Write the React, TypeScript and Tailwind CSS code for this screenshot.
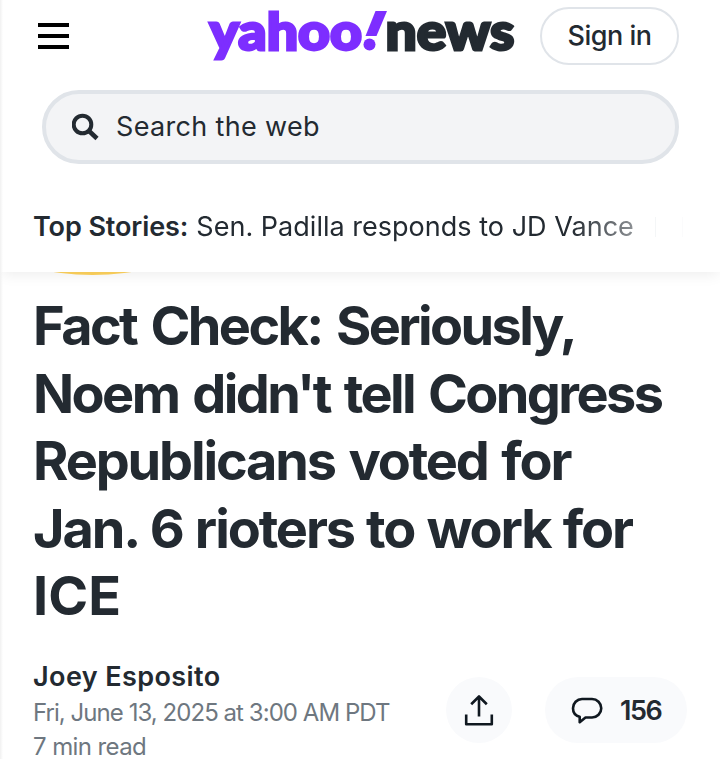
const headline = [
  { text: "Fact Check: Seriously,", spacing: "tracking-[-2.6px] [word-spacing:4px]" },
  { text: "Noem didn't tell Congress", spacing: "tracking-[-2.6px] [word-spacing:3.7px]" },
  { text: "Republicans voted for", spacing: "tracking-[-2.15px] [word-spacing:3px]" },
  { text: "Jan. 6 rioters to work for", spacing: "tracking-[-2.1px] [word-spacing:1.5px]" },
  { text: "ICE", spacing: "tracking-[0.1px]" },
];

function Logo() {
  return (
    <svg width="310" height="70" viewBox="0 0 310 70" className="shrink-0 overflow-visible font-['Lato',sans-serif] font-black" aria-label="yahoo!news">
      <text x="2.5" y="45.200" fontSize="52" fill="#7d2eff" stroke="#7d2eff" strokeWidth="2.8" textLength="152.500" lengthAdjust="spacingAndGlyphs">yahoo</text>
      <path d="M168.500 6H180l-10.500 25h-11z" fill="#7d2eff" />
      <circle cx="162.500" cy="39.500" r="6" fill="#7d2eff" />
      <text x="178.500" y="45.200" fontSize="52" fill="#232a31" stroke="#232a31" strokeWidth="2.8" textLength="129" lengthAdjust="spacingAndGlyphs">news</text>
    </svg>
  );
}

function Header() {
  return (
    <header className="relative z-10 h-[272px] bg-white shadow-[0_4px_14px_-2px_rgba(0,0,0,0.08)]">
      <div className="flex items-start h-[90px] pl-[38px]">
        <button aria-label="Menu" className="mt-[23px] flex flex-col gap-[7px]">
          <span className="h-[4px] w-[31px] bg-black" />
          <span className="h-[4px] w-[31px] bg-black" />
          <span className="h-[4px] w-[31px] bg-black" />
        </button>
        <div className="ml-[138px] mt-[5px]">
          <Logo />
        </div>
        <button className="ml-[23px] mt-[7px] h-[58px] w-[139px] shrink-0 rounded-full border-2 border-[#e0e4e9] text-[27px] font-medium tracking-[-0.5px]">
          Sign in
        </button>
      </div>

      <div className="ml-[42px] flex h-[74px] w-[637px] items-center rounded-full border-4 border-[#e0e4e9] bg-[#f3f4f6] pl-[26px]">
        <svg width="28" height="28" viewBox="0 0 28 28" fill="none" stroke="#232a31" className="shrink-0">
          <circle cx="10.500" cy="11.500" r="8.800" strokeWidth="4" />
          <path d="M16.500 17.500l8.500 8" strokeWidth="4.600" />
        </svg>
        <span className="ml-4 text-[27px] tracking-[0.33px]">Search the web</span>
      </div>

      <div className="flex h-[108px] items-center pl-[33px] pt-[18px] text-[27px] leading-9 whitespace-nowrap">
        <strong className="font-semibold tracking-[-0.1px]">Top Stories:</strong>
        <div className="ml-2 flex items-center [mask-image:linear-gradient(to_right,#000_375px,transparent_505px)]">
          <span className="w-[437px] tracking-[0.02px]">Sen. Padilla responds to JD Vance</span>
          <span className="ml-[22px] h-5 w-px bg-[#e0e4e9]" />
          <span className="ml-[26px] h-5 w-px bg-[#e0e4e9]" />
        </div>
      </div>
    </header>
  );
}

function Byline() {
  return (
    <div className="mt-[28px] flex pl-[33px]">
      <div className="w-[413px] shrink-0 whitespace-nowrap text-[24px] leading-[34px] text-[#6e7780]">
        <div className="text-[27px] leading-[38px] font-semibold tracking-[0.4px] text-[#232a31]">Joey Esposito</div>
        <div className="tracking-[-0.95px]">Fri, June 13, 2025 at 3:00 AM PDT</div>
        <div className="mt-[5px] leading-6 tracking-[-0.6px]">7 min read</div>
      </div>
      <button aria-label="Share" className="mt-[19px] flex h-[66px] w-[66px] shrink-0 items-center justify-center rounded-full bg-[#f9fafc]">
        <svg width="30" height="32" viewBox="0 0 30 32" fill="none" stroke="#101820" strokeWidth="2.600">
          <path d="M2.200 20.500v9.800h25.600v-9.800M15 22.500V2.500M7.200 10.200L15 2.500l7.800 7.700" strokeLinejoin="round" />
        </svg>
      </button>
      <button className="ml-[33px] mt-[19px] flex h-[66px] w-[142px] shrink-0 items-center rounded-full bg-[#f9fafc] pl-[26px]">
        <svg width="32" height="30" viewBox="0 0 32 30" fill="none" stroke="#101820" strokeWidth="2.600" strokeLinejoin="round">
          <path d="M11 4h10a9.250 9.250 0 0 1 0 18.500h-6.500l-5.800 4.700v-5.500C4.600 20.700 2 17.500 2 13.200A9.200 9.200 0 0 1 11 4z" />
        </svg>
        <span className="ml-[17px] pt-[3px] text-[27px] font-semibold tracking-[-1.400px]">156</span>
      </button>
    </div>
  );
}

export default function App() {
  return (
    <div className="relative h-[759px] w-[720px] overflow-hidden bg-white font-['Inter',sans-serif] text-[#232a31]">
      <Header />
      <main>
        <div className="ml-[52px] flex h-[3px] w-[80px] items-end justify-center overflow-hidden">
          <div className="h-[50px] w-[165px] shrink-0 rounded-[50%] bg-[#ffd35c]" />
        </div>
        <h1 className="mt-[17px] pl-[33px] text-[54px] leading-[67.500px] font-bold whitespace-nowrap">
          {headline.map((line) => (
            <span key={line.text} className="block">
              <span className={line.spacing}>{line.text}</span>
            </span>
          ))}
        </h1>
        <Byline />
      </main>
      <div className="absolute inset-y-0 left-0 z-20 w-[3px] bg-gradient-to-r from-[#f1f1f1] to-transparent" />
    </div>
  );
}
